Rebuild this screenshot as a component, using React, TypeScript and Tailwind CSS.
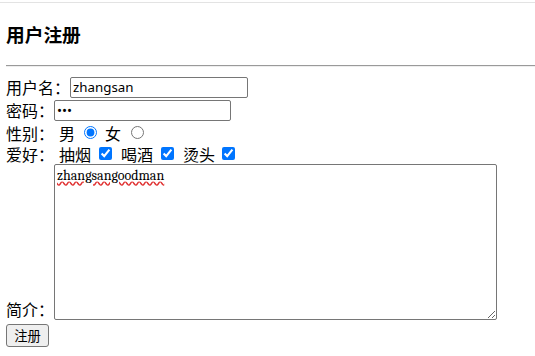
import React from 'react';

const cjk = { fontFamily: '"Noto Sans CJK SC", "Microsoft YaHei", sans-serif' };

export default function App() {
  return (
    <div className="h-[356px] w-[535px] overflow-hidden bg-white text-black text-[16px]" style={cjk}>
      <div className="mt-[2px] h-px w-full bg-[#e3e3e3]" />
      <h3 className="mt-[19px] pl-[6px] text-[18.72px] font-bold leading-[24px]">用户注册</h3>
      <hr className="mt-[19px] ml-[6px] h-[2px] border-t border-b border-t-[#9a9a9a] border-b-[#eeeeee]" />

      <form className="mt-[9px] pl-[6px]">
        <div className="flex h-[23px] items-center leading-[21px]">
          <span>用户名：</span>
          <input
            type="text"
            defaultValue="zhangsan"
            className="h-[21px] w-[178px] rounded-[2px] border border-[#767676] px-[2px] text-[13.33px] font-sans"
          />
        </div>
        <div className="flex h-[23px] items-center leading-[21px]">
          <span>密码：</span>
          <input
            type="password"
            defaultValue="123"
            className="h-[21px] w-[177px] rounded-[2px] border border-[#767676] px-[2px] text-[13.33px] font-sans"
          />
        </div>
        <div className="flex h-[21px] items-center leading-[20px]">
          <span>性别：</span>
          <span className="ml-[5px]">男</span>
          <input type="radio" name="sex" defaultChecked className="ml-[9px] h-[13px] w-[13px]" />
          <span className="ml-[8px]">女</span>
          <input type="radio" name="sex" className="ml-[10px] h-[13px] w-[13px]" />
        </div>
        <div className="flex h-[21px] items-center leading-[20px]">
          <span>爱好：</span>
          <span className="ml-[5px]">抽烟</span>
          <input type="checkbox" defaultChecked className="ml-[8px] h-[13px] w-[13px]" />
          <span className="ml-[9px]">喝酒</span>
          <input type="checkbox" defaultChecked className="ml-[8px] h-[13px] w-[13px]" />
          <span className="ml-[9px]">烫头</span>
          <input type="checkbox" defaultChecked className="ml-[7px] h-[13px] w-[13px]" />
        </div>
        <div className="flex items-end">
          <span className="leading-[21px]">简介：</span>
          <textarea
            defaultValue="zhangsangoodman"
            className="h-[156px] w-[443px] rounded-[2px] border border-[#767676] px-[2px] py-[3px] font-serif text-[14px] leading-[15px] underline decoration-wavy decoration-[#e03030]"
          />
        </div>
        <button
          type="button"
          className="mt-[4px] h-[23px] w-[43px] rounded-[3px] border border-[#767676] bg-[#efefef] text-[13.33px] leading-[21px]"
        >
          注册
        </button>
      </form>
    </div>
  );
}
